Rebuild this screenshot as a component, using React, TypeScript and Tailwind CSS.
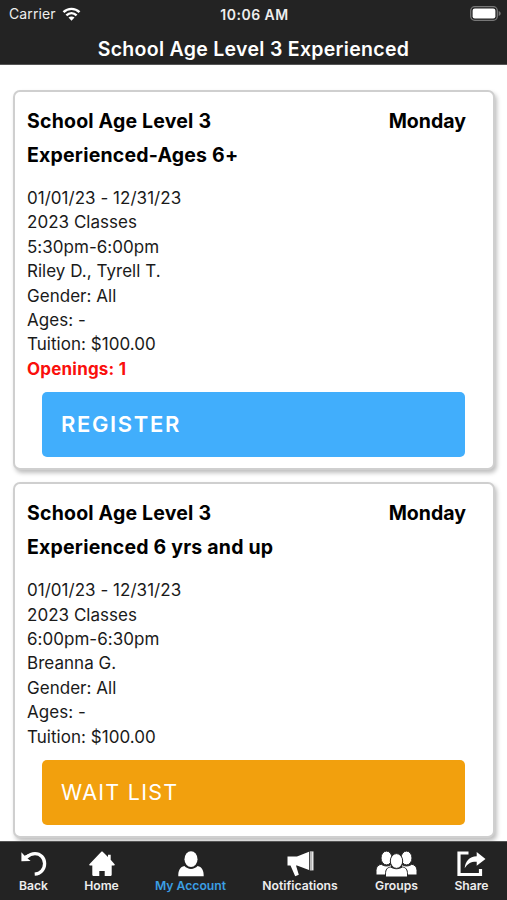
import React from 'react';

const classes = [
  {
    id: 1,
    title: ['School Age Level 3', 'Experienced-Ages 6+'],
    day: 'Monday',
    details: [
      '01/01/23 - 12/31/23',
      '2023 Classes',
      '5:30pm-6:00pm',
      'Riley D., Tyrell T.',
      'Gender: All',
      'Ages: -',
      'Tuition: $100.00'
    ],
    openings: 1
  },
  {
    id: 2,
    title: ['School Age Level 3', 'Experienced 6 yrs and up'],
    day: 'Monday',
    details: [
      '01/01/23 - 12/31/23',
      '2023 Classes',
      '6:00pm-6:30pm',
      'Breanna G.',
      'Gender: All',
      'Ages: -',
      'Tuition: $100.00'
    ],
    openings: 0
  }
];

function BackIcon() {
  return (
    <svg width="26" height="26" viewBox="0 0 26 26">
      <path d="M5.500 6.200C8.600 3.500 11.200 2.600 14 2.600c5.500 0 9.600 4.400 9.600 10 0 5.800-3.900 10.200-9.900 10.600" fill="none" stroke="#fff" strokeWidth="3.300" />
      <path d="M.4 1.200l3.200 3.500 3.600-1.500-.6 4.300 3 2.500-9.200.2z" fill="#fff" />
    </svg>
  );
}

function HomeIcon() {
  return (
    <svg width="26" height="26" viewBox="0 0 26 26">
      <path d="M12.300.8c.4-.4 1-.4 1.400 0l5.300 5.200V3.800h2.700v5l3.900 4.400c.4.500.1 1.200-.5 1.200h-2.400v9.400c0 .7-.4 1.100-1 1.100h-6v-4.900h-5.400v4.900h-6c-.6 0-1-.4-1-1.100v-9.400H.9c-.6 0-.9-.7-.5-1.200z" fill="#fff" />
    </svg>
  );
}

function AccountIcon() {
  return (
    <svg width="26" height="26" viewBox="0 0 26 26">
      <ellipse cx="13" cy="8.200" rx="6.500" ry="7.900" fill="#fff" />
      <path d="M.3 25.200c-.3-5.700 2-9.500 6.100-10.200 1.700 1.800 4 2.900 6.600 2.900s4.900-1.100 6.600-2.900c4.100.7 6.400 4.500 6.100 10.200z" fill="#fff" />
    </svg>
  );
}

function NotificationsIcon() {
  return (
    <svg width="27" height="26" viewBox="0 0 27 26">
      <path d="M.5 5.600h9.700v9H9l2.800 9.100-3.600 1.500-4.700-10.600h-3z" fill="#fff" />
      <path d="M10 5.600L22 .8v18.100l-12-4.300z" fill="#fff" />
      <path d="M22.800 .4h3.700v19h-3.700z" fill="#e8e8e8" />
      <path d="M24 .4v19" stroke="#777" strokeWidth=".8" />
    </svg>
  );
}

function GroupsIcon() {
  return (
    <svg width="41" height="26" viewBox="0 0 41 26">
      <g fill="#fff" stroke="#232323" strokeWidth="1">
        <ellipse cx="10.500" cy="7" rx="5.500" ry="6.900" />
        <ellipse cx="30.500" cy="7" rx="5.500" ry="6.900" />
        <path d="M0 24v-4.800c0-3.200 2.300-5.600 5.300-5.900 3 2.200 7.500 2.200 10.200 0V24z" />
        <path d="M41 24v-4.800c0-3.200-2.300-5.600-5.300-5.900-3 2.200-7.500 2.200-10.200 0V24z" />
        <path d="M9.500 26v-3.100c0-4.300 1.700-6.600 5.300-6.900 3.500 2.300 7.900 2.300 11.400 0 3.600.3 5.300 2.600 5.300 6.900V26z" />
        <ellipse cx="20.500" cy="10" rx="6.200" ry="7.400" />
      </g>
    </svg>
  );
}

function ShareIcon() {
  return (
    <svg width="29" height="26" viewBox="0 0 29 26">
      <path d="M11.500 2H2v21.500h21.500V18" fill="none" stroke="#fff" strokeWidth="3.200" />
      <path d="M19.700 1l8.800 6.900-8.800 6.900v-4.100c-5.500-.2-9 1.500-12 6.600.6-7.100 4.700-11.600 12-12z" fill="#fff" />
    </svg>
  );
}

const tabs = [
  { label: 'Back', Icon: BackIcon, width: 'w-[67px]' },
  { label: 'Home', Icon: HomeIcon, width: 'w-[69px]' },
  { label: 'My Account', Icon: AccountIcon, width: 'w-[109px]', active: true },
  { label: 'Notifications', Icon: NotificationsIcon, width: 'w-[110px]' },
  { label: 'Groups', Icon: GroupsIcon, width: 'w-[83px]' },
  { label: 'Share', Icon: ShareIcon, width: 'w-[67px]' }
];

function StatusBar() {
  return (
    <div className="grid grid-cols-3 items-center h-[27px] pl-[9px] pr-[6px] text-[14px] text-[#eee]">
      <div className="flex items-center gap-[6px]">
        <span className="tracking-[0.100px]">Carrier</span>
        <svg width="19" height="14" viewBox="0 0 18 14" fill="none" stroke="#fff" strokeWidth="2.400">
          <path d="M1 5.200C5.500.7 12.500.7 17 5.200" />
          <path d="M3.900 8.400c3-2.900 7.200-2.900 10.200 0" />
          <path d="M9 13.700l-3-3.100c1.700-1.500 4.300-1.500 6 0z" fill="#fff" stroke="none" />
        </svg>
      </div>
      <div className="pt-px pr-[1px] text-center text-[14px] font-semibold tracking-[0.500px] whitespace-nowrap">10:06 AM</div>
      <svg className="justify-self-end" width="31" height="15" viewBox="0 0 31 15">
        <rect x=".7" y=".7" width="26.600" height="13.600" rx="4" fill="none" stroke="#777" strokeWidth="1.300" />
        <rect x="2.600" y="2.600" width="22.800" height="9.800" rx="2.200" fill="#fff" />
        <path d="M28.700 5v5c1.200-.4 2-1.400 2-2.500s-.8-2.100-2-2.500z" fill="#777" />
      </svg>
    </div>
  );
}

function ClassCard({ item }: { item: (typeof classes)[number] }) {
  return (
    <div className="rounded-[7px] border-2 border-[#cfcfcf] bg-white pt-3 pb-[11px] pl-3 pr-[27px] shadow-[2px_3px_4px_rgba(0,0,0,0.25)]">
      <div className="flex justify-between text-[19.500px] leading-[34px] font-bold text-black">
        <h2 className="tracking-[0.200px]">
          {item.title.map((line) => (
            <span key={line} className="block">{line}</span>
          ))}
        </h2>
        <span>{item.day}</span>
      </div>
      <div className="mt-[14px] text-[17px] leading-[24.400px] tracking-[0.030px] text-[#1a1a1a]">
        {item.details.map((line) => (
          <p key={line}>{line}</p>
        ))}
        {item.openings > 0 && <p className="font-bold tracking-[0.200px] text-[#fa0f0c]">Openings: {item.openings}</p>}
      </div>
      {item.openings > 0 ? (
        <button className="mt-[11px] ml-[15px] block h-[65px] w-[423px] rounded-[5px] bg-[#41aefc] pl-[19px] text-left text-[22px] font-semibold tracking-[1.650px] text-white">
          REGISTER
        </button>
      ) : (
        <button className="mt-[11px] ml-[15px] block h-[65px] w-[423px] rounded-[5px] bg-[#f2a00d] pl-[19px] text-left text-[21.500px] tracking-[1.250px] text-white">
          WAIT LIST
        </button>
      )}
    </div>
  );
}

export default function App() {
  return (
    <div className="flex h-[900px] w-[507px] flex-col overflow-hidden bg-white font-['Inter',sans-serif]">
      <header className="h-[65px] shrink-0 border-b border-[#555] bg-[#232323]">
        <StatusBar />
        <h1 className="pt-px text-center text-[19.500px] leading-[42px] font-semibold tracking-[0.300px] text-white">
          School Age Level 3 Experienced
        </h1>
      </header>
      <main className="flex min-h-0 flex-1 flex-col gap-[12px] overflow-hidden pt-[25px] pr-3 pl-[13px]">
        {classes.map((item) => (
          <ClassCard key={item.id} item={item} />
        ))}
      </main>
      <nav className="flex h-[59px] shrink-0 border-t border-[#555] bg-[#232323]">
        {tabs.map(({ label, Icon, width, active }) => (
          <a key={label} className={`flex flex-col items-center pt-[9px] ${width}`}>
            <Icon />
            <span className={`mt-[1px] text-[12.200px] leading-4 font-semibold whitespace-nowrap ${active ? 'text-[#3b9fe3]' : 'text-[#eee]'}`}>
              {label}
            </span>
          </a>
        ))}
      </nav>
    </div>
  );
}
